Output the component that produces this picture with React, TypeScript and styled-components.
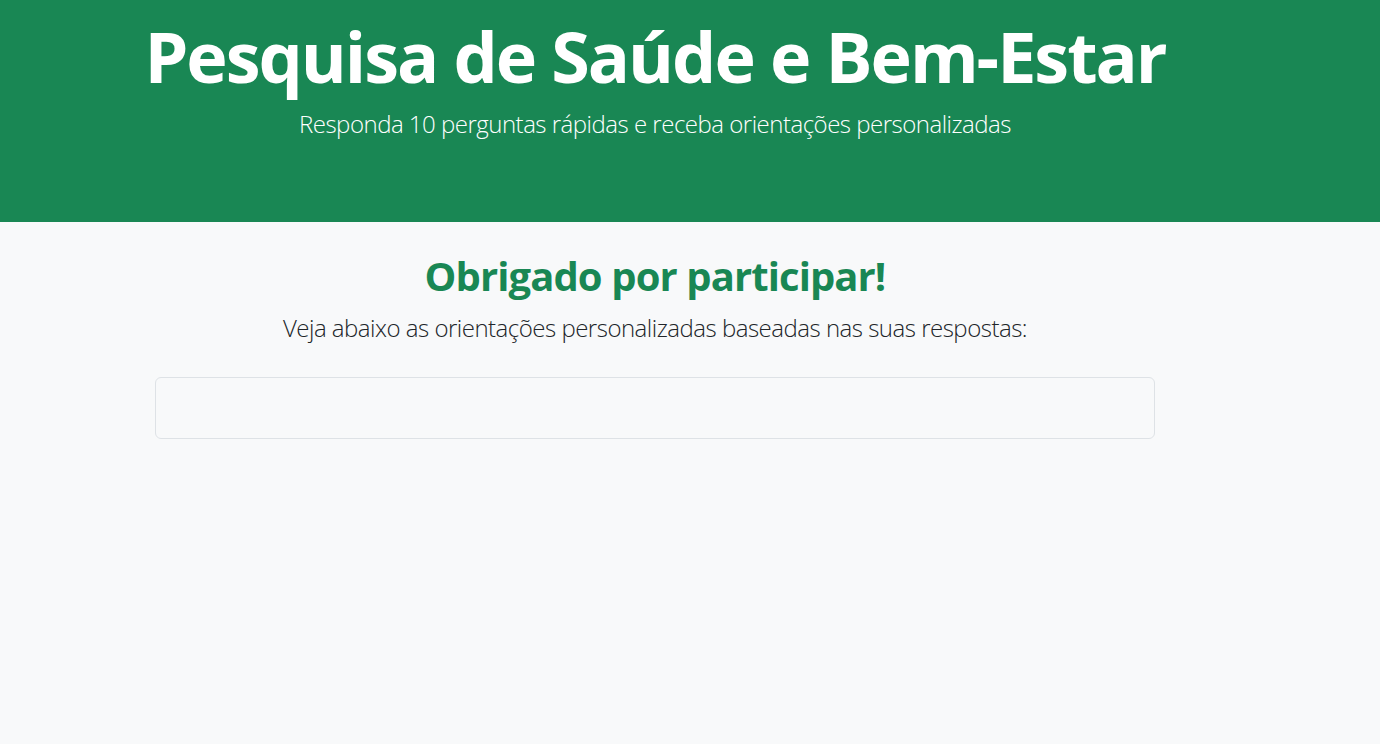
import React from "react";
import styled, { createGlobalStyle } from "styled-components";

const Global = createGlobalStyle`
  html, body { margin: 0; padding: 0; background: #f8f9fa; }
  body { font-family: "Open Sans", "Noto Sans", sans-serif; color: #212529; }
  * { box-sizing: border-box; }
`;

const Header = styled.header`
  background: #198754;
  color: #fff;
  height: 222px;
  display: flex;
`;

const Inner = styled.div`
  width: 1000px;
  margin-left: 155px;
  display: flex;
  flex-direction: column;
  align-items: center;
  text-align: center;
`;

const Title = styled.h1`
  margin: 14px 0 0;
  font-size: 70px;
  font-weight: 700;
  line-height: 1.2;
  letter-spacing: -2px;
  white-space: nowrap;
`;

const Subtitle = styled.p`
  margin: 8px 0 0;
  font-size: 24px;
  font-weight: 300;
  line-height: 1.5;
  letter-spacing: -0.5px;
  white-space: nowrap;
`;

const Main = styled.main`
  display: flex;
`;

const Heading = styled.h2`
  margin: 30px 0 0;
  font-size: 40px;
  font-weight: 700;
  line-height: 1.2;
  letter-spacing: -0.9px;
  color: #198754;
`;

const Lead = styled.p`
  margin: 10px 0 0;
  font-size: 24px;
  font-weight: 300;
  line-height: 1.5;
  letter-spacing: -0.5px;
  white-space: nowrap;
`;

const Card = styled.div`
  align-self: stretch;
  margin-top: 31px;
  height: 62px;
  border: 1px solid #dee2e6;
  border-radius: 6px;
  background: #f8f9fa;
`;

export default function App() {
  return (
    <>
      <Global />
      <Header>
        <Inner>
          <Title>Pesquisa de Saúde e Bem-Estar</Title>
          <Subtitle>Responda 10 perguntas rápidas e receba orientações personalizadas</Subtitle>
        </Inner>
      </Header>
      <Main>
        <Inner>
          <Heading>Obrigado por participar!</Heading>
          <Lead>Veja abaixo as orientações personalizadas baseadas nas suas respostas:</Lead>
          <Card />
        </Inner>
      </Main>
    </>
  );
}
